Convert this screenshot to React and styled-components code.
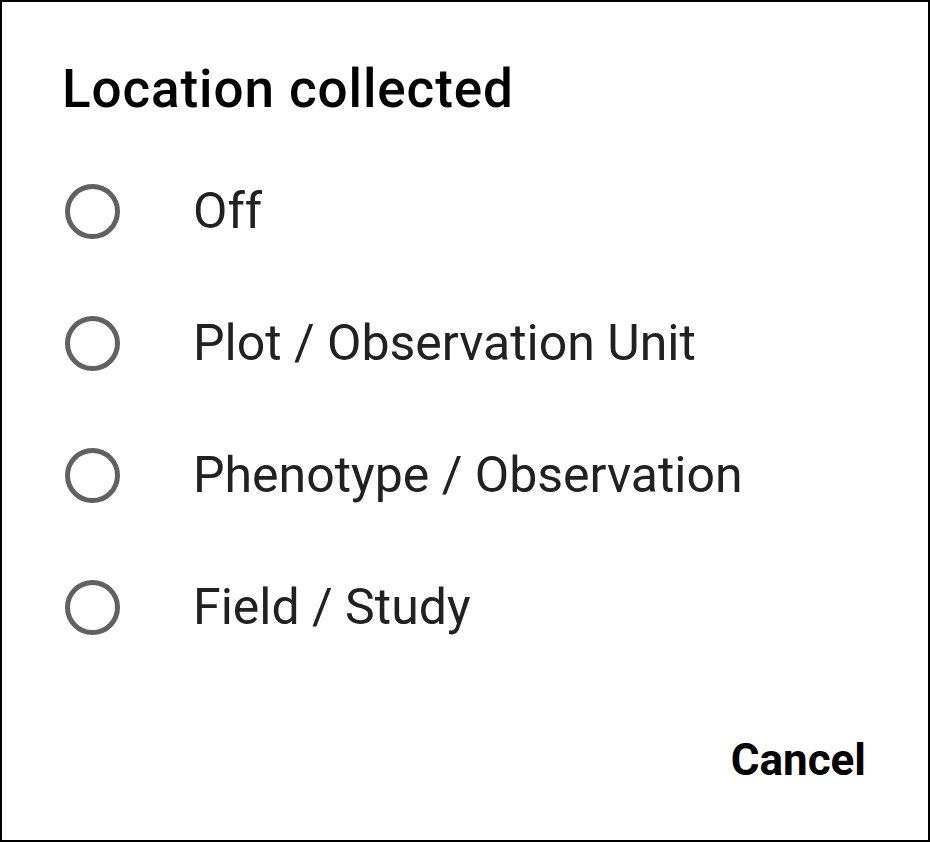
import React from "react";
import styled, { createGlobalStyle } from "styled-components";

const GlobalStyle = createGlobalStyle`
  html, body {
    margin: 0;
    padding: 0;
    background: #ffffff;
  }
  body {
    font-family: Roboto, "Noto Sans", "Liberation Sans", sans-serif;
  }
`;

const Dialog = styled.div`
  box-sizing: border-box;
  width: 930px;
  height: 842px;
  border: 2px solid #000000;
  background: #ffffff;
  display: flex;
  flex-direction: column;
  padding: 0 62px 0 60px;
`;

const Title = styled.h1`
  margin: 0;
  padding-top: 57px;
  font-size: 53px;
  line-height: 60px;
  font-weight: 500;
  letter-spacing: 0.9px;
  color: #000000;
`;

const OptionList = styled.div`
  display: flex;
  flex-direction: column;
  margin-top: 26px;
`;

const Option = styled.label`
  display: flex;
  align-items: center;
  height: 132px;
  cursor: pointer;
`;

const Radio = styled.span`
  box-sizing: border-box;
  width: 55px;
  height: 55px;
  margin-left: 3px;
  border-radius: 50%;
  border: 5px solid #616161;
  flex-shrink: 0;
`;

const OptionText = styled.span`
  margin-left: 73px;
  font-size: 50px;
  color: #212121;
`;

const Actions = styled.div`
  display: flex;
  justify-content: flex-end;
  margin-top: 61px;
`;

const TextButton = styled.button`
  border: none;
  background: none;
  padding: 0;
  font-family: Roboto, "Noto Sans", "Liberation Sans", sans-serif;
  font-size: 44px;
  font-weight: 700;
  color: #000000;
  cursor: pointer;
`;

const options = [
  "Off",
  "Plot / Observation Unit",
  "Phenotype / Observation",
  "Field / Study",
];

export default function App() {
  return (
    <>
      <GlobalStyle />
      <Dialog>
        <Title>Location collected</Title>
        <OptionList>
          {options.map((o) => (
            <Option key={o}>
              <Radio />
              <OptionText>{o}</OptionText>
            </Option>
          ))}
        </OptionList>
        <Actions>
          <TextButton>Cancel</TextButton>
        </Actions>
      </Dialog>
    </>
  );
}
